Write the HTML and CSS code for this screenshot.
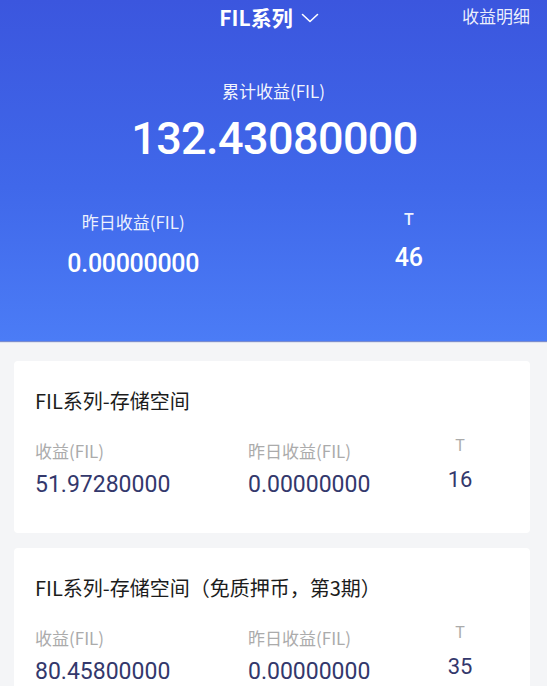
FILE: index.html
```html
<!DOCTYPE html>
<html lang="zh">
<head>
<meta charset="utf-8">
<title>FIL系列</title>
<link rel="stylesheet" href="styles.css">
</head>
<body>
<div class="page">
  <header class="hero">
    <div class="topbar">
      <div class="topbar-title">
        <span class="title-text">FIL系列</span>
        <svg class="chevron" width="18" height="10" viewBox="0 0 18 10"><polyline points="1.5,1.5 9,8.5 16.5,1.5" fill="none" stroke="#ffffff" stroke-width="1.6" stroke-linecap="round" stroke-linejoin="round"/></svg>
      </div>
      <a class="topbar-link">收益明细</a>
    </div>
    <div class="total-label">累计收益(FIL)</div>
    <div class="total-value">132.43080000</div>
    <div class="hero-stats">
      <div class="hero-stat">
        <div class="hero-stat-label">昨日收益(FIL)</div>
        <div class="hero-stat-value">0.00000000</div>
      </div>
      <div class="hero-stat">
        <div class="hero-stat-label">T</div>
        <div class="hero-stat-value">46</div>
      </div>
    </div>
  </header>

  <main class="list">
    <section class="card">
      <h2 class="card-title">FIL系列-存储空间</h2>
      <div class="card-grid">
        <div class="cell">
          <div class="cell-label">收益(FIL)</div>
          <div class="cell-value">51.97280000</div>
        </div>
        <div class="cell">
          <div class="cell-label">昨日收益(FIL)</div>
          <div class="cell-value">0.00000000</div>
        </div>
        <div class="cell cell-t">
          <div class="cell-label">T</div>
          <div class="cell-value">16</div>
        </div>
      </div>
    </section>

    <section class="card">
      <h2 class="card-title">FIL系列-存储空间（免质押币，第3期）</h2>
      <div class="card-grid">
        <div class="cell">
          <div class="cell-label">收益(FIL)</div>
          <div class="cell-value">80.45800000</div>
        </div>
        <div class="cell">
          <div class="cell-label">昨日收益(FIL)</div>
          <div class="cell-value">0.00000000</div>
        </div>
        <div class="cell cell-t">
          <div class="cell-label">T</div>
          <div class="cell-value">35</div>
        </div>
      </div>
    </section>
  </main>
</div>
</body>
</html>
```

FILE: styles.css
```css
* {
  box-sizing: border-box;
}

html, body {
  margin: 0;
  padding: 0;
}

body {
  background: #f4f5f7;
  font-family: "Noto Sans CJK SC", "Noto Sans", sans-serif;
  color: #222222;
}

.page {
  width: 547px;
  overflow: hidden;
}

.hero {
  height: 341px;
  background: linear-gradient(180deg, #3b56de 0%, #4068ea 55%, #4b7cf6 100%);
  color: #ffffff;
  box-shadow: 0 1px 1px rgba(40, 70, 180, 0.6);
  display: flex;
  flex-direction: column;
}

.topbar {
  height: 34px;
  display: grid;
  grid-template-columns: 1fr auto 1fr;
  align-items: center;
  padding-right: 17px;
}

.topbar-title {
  grid-column: 2;
  display: flex;
  align-items: center;
  gap: 8px;
  margin-left: 8px;
}

.title-text {
  font-size: 21px;
  font-weight: 700;
  line-height: 28px;
}

.chevron {
  display: block;
  margin-top: 1px;
}

.topbar-link {
  grid-column: 3;
  justify-self: end;
  font-size: 17px;
  line-height: 24px;
  color: rgba(255, 255, 255, 0.92);
  margin-top: -2px;
}

.total-label {
  margin-top: 45px;
  text-align: center;
  font-size: 17px;
  line-height: 24px;
  color: rgba(255, 255, 255, 0.95);
}

.total-value {
  margin-top: 10px;
  text-align: center;
  font-family: "Roboto", "Noto Sans", sans-serif;
  font-size: 45px;
  font-weight: 500;
  line-height: 52px;
  letter-spacing: -0.6px;
  padding-left: 2px;
}

.hero-stats {
  margin-top: 45px;
  display: grid;
  grid-template-columns: 1fr 1fr;
  padding-right: 2px;
}

.hero-stat {
  display: flex;
  flex-direction: column;
  align-items: center;
}

.hero-stat:first-child {
  margin-right: 6px;
}

.hero-stat-label {
  font-size: 17px;
  line-height: 24px;
  color: rgba(255, 255, 255, 0.92);
}

.hero-stat:last-child .hero-stat-label {
  font-family: "Roboto", sans-serif;
  font-size: 16px;
  font-weight: 500;
  margin-top: -2px;
}

.hero-stat-value {
  margin-top: 15px;
  font-family: "Roboto", "Noto Sans", sans-serif;
  font-size: 25px;
  font-weight: 500;
  line-height: 30px;
  letter-spacing: -0.3px;
}

.hero-stat:last-child .hero-stat-value {
  margin-top: 11px;
}

.list {
  padding: 20px 17px 20px 14px;
  display: flex;
  flex-direction: column;
  gap: 15px;
}

.card {
  background: #ffffff;
  border-radius: 4px;
  padding: 26px 40px 35px 21px;
}

.card-title {
  margin: 0;
  font-size: 20px;
  font-weight: 400;
  line-height: 28px;
  color: #1c1c1c;
}

.card-grid {
  margin-top: 24px;
  display: grid;
  grid-template-columns: 213px 1fr 60px;
}

.cell {
  display: flex;
  flex-direction: column;
}

.cell-t {
  align-items: center;
  margin-top: -5px;
}

.cell-label {
  font-size: 17px;
  line-height: 24px;
  color: #ababab;
}

.cell-t .cell-label {
  font-family: "Roboto", sans-serif;
  font-size: 16px;
}

.cell-value {
  margin-top: 9px;
  font-family: "Roboto", "Noto Sans", sans-serif;
  font-size: 23px;
  line-height: 26px;
  color: #33386c;
}

.cell-t .cell-value {
  font-size: 22px;
}
```
